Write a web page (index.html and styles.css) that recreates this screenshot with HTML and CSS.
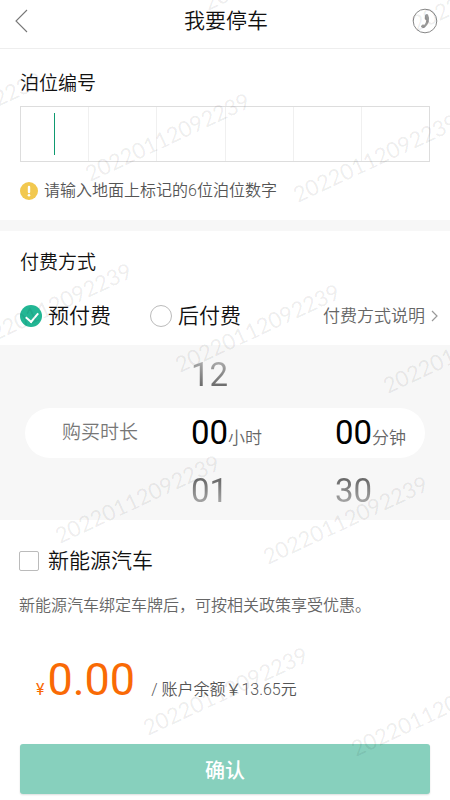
FILE: index.html
```html
<!DOCTYPE html>
<html lang="zh-CN">
<head>
  <meta charset="UTF-8" />
  <meta name="viewport" content="width=device-width, initial-scale=1" />
  <title>我要停车</title>
  <link rel="stylesheet" href="styles.css">
</head>
<body>
  <header class="topbar">
    <button class="icon-btn" type="button" aria-label="返回">
      <svg width="14" height="26" viewBox="0 0 14 26" fill="none" stroke="#777" stroke-width="1.1"><path d="M13 2 2 13l11 11" /></svg>
    </button>
    <h1>我要停车</h1>
    <button class="icon-btn" type="button" aria-label="电话">
      <svg width="26" height="26" viewBox="0 0 26 26">
        <circle cx="13" cy="13" r="11.8" fill="none" stroke="#888" stroke-width="1" />
        <path d="M13.600 6.400q1.500-1 2.400.2 1.800 3.600.8 7.200-1.100 3.600-4.400 6-.8.500-1.600.200l-1.600-.9q-.5-.5-.1-1.100l1.100-1.300q.5-.5 1.200-.2l.8.400q1.900-2 2.100-4.700l-1.100-.6q-.5-.3-.4-.9l.3-3.400q0-.6.5-.9z" fill="#999" />
      </svg>
    </button>
  </header>

  <form class="parking">
    <section class="berth">
      <h2>泊位编号</h2>
      <div class="code">
        <label class="cell active"><input type="text" inputmode="numeric" maxlength="1" aria-label="第1位"></label>
        <label class="cell"><input type="text" inputmode="numeric" maxlength="1" aria-label="第2位"></label>
        <label class="cell"><input type="text" inputmode="numeric" maxlength="1" aria-label="第3位"></label>
        <label class="cell"><input type="text" inputmode="numeric" maxlength="1" aria-label="第4位"></label>
        <label class="cell"><input type="text" inputmode="numeric" maxlength="1" aria-label="第5位"></label>
        <label class="cell"><input type="text" inputmode="numeric" maxlength="1" aria-label="第6位"></label>
      </div>
      <p class="hint">
        <svg width="18" height="18" viewBox="0 0 18 18">
          <circle cx="9" cy="9" r="9" fill="#f2c84f" />
          <path d="M9 5v5" stroke="#fff" stroke-width="2.400" stroke-linecap="round" />
          <circle cx="9" cy="13.200" r="1.300" fill="#fff" />
        </svg>
        请输入地面上标记的6位泊位数字
      </p>
    </section>

    <section class="payment">
      <h2>付费方式</h2>
      <div class="methods">
        <label><input type="radio" name="method" value="pre" checked>预付费</label>
        <label><input type="radio" name="method" value="post">后付费</label>
        <a href="#">付费方式说明
          <svg width="7" height="12" viewBox="0 0 7 12" fill="none" stroke="#999" stroke-width="1.200"><path d="M1 1l5 5-5 5" /></svg>
        </a>
      </div>
    </section>

    <section class="picker">
      <div class="pill"></div>
      <span class="picker-label">购买时长</span>
      <span class="num hour prev">12</span>
      <span class="now hour"><span class="num">00</span>小时</span>
      <span class="num hour next">01</span>
      <span class="now minute"><span class="num">00</span>分钟</span>
      <span class="num minute next">30</span>
    </section>

    <section class="energy">
      <label><input type="checkbox" name="energy">新能源汽车</label>
      <p>新能源汽车绑定车牌后，可按相关政策享受优惠。</p>
    </section>

    <section class="total">
      <p class="price"><span>¥</span><strong>0.00</strong></p>
      <p class="balance">/ 账户余额￥13.65元</p>
    </section>

    <button class="confirm" type="submit">确认</button>
  </form>

  <svg class="watermark" aria-hidden="true">
    <text transform="translate(208 11) rotate(-25)">20220112092239</text>
    <text transform="translate(416 32) rotate(-25)">20220112092239</text>
    <text transform="translate(-118 161) rotate(-25)">20220112092239</text>
    <text transform="translate(90 182) rotate(-25)">20220112092239</text>
    <text transform="translate(298 203) rotate(-25)">20220112092239</text>
    <text transform="translate(-28 352) rotate(-25)">20220112092239</text>
    <text transform="translate(180 373) rotate(-25)">20220112092239</text>
    <text transform="translate(388 394) rotate(-25)">20220112092239</text>
    <text transform="translate(60 544) rotate(-25)">20220112092239</text>
    <text transform="translate(268 565) rotate(-25)">20220112092239</text>
    <text transform="translate(148 736) rotate(-25)">20220112092239</text>
    <text transform="translate(356 757) rotate(-25)">20220112092239</text>
  </svg>
</body>
</html>
```
FILE: styles.css
```css
* {
  box-sizing: border-box;
}

body {
  position: relative;
  margin: 0;
  font-family: Roboto, 'Noto Sans CJK SC', sans-serif;
  font-weight: 350;
  background: #fff;
  color: #111;
}

h1,
h2,
p {
  margin: 0;
  font-weight: 350;
}

button,
input {
  font: inherit;
  margin: 0;
}

.topbar {
  display: flex;
  align-items: center;
  justify-content: space-between;
  height: 49px;
  padding: 0 12px 6px 14px;
  border-bottom: 1px solid #eee;
}

h1 {
  font-size: 21px;
  line-height: 30px;
}

.icon-btn {
  display: flex;
  width: 26px;
  padding: 0;
  border: 0;
  background: none;
}

h2 {
  font-size: 19px;
  line-height: 28px;
}

.berth {
  padding: 21px 20px 17px;
  border-bottom: 11px solid #f7f7f7;
}

.code {
  display: flex;
  height: 56px;
  margin: 8px 0 17px;
  border: 1px solid #ddd;
}

.cell {
  position: relative;
  flex: 1;
}

.cell + .cell {
  border-left: 1px solid #f0f0f0;
}

.cell input {
  width: 100%;
  height: 100%;
  border: 0;
  outline: 0;
  background: none;
  text-align: center;
  font-size: 32px;
}

.cell.active::after {
  content: "";
  position: absolute;
  top: 6px;
  left: calc(50% - 1px);
  width: 1px;
  height: 42px;
  background: #0f9a70;
}

.hint {
  display: flex;
  align-items: center;
  gap: 6px;
  font-size: 16px;
  line-height: 24px;
  color: #555;
}

.payment {
  padding: 18px 12px 12px 20px;
}

.methods {
  display: flex;
  align-items: center;
  gap: 39px;
  margin-top: 22px;
}

.methods label,
.energy label {
  display: flex;
  align-items: center;
  font-size: 21px;
  line-height: 30px;
}

.methods label {
  gap: 6px;
}

.methods input {
  appearance: none;
  width: 22px;
  height: 22px;
  border: 1px solid #bbb;
  border-radius: 50%;
}

.methods input:checked {
  position: relative;
  border: 0;
  background: #22b694;
}

.methods input:checked::after {
  content: "";
  position: absolute;
  top: 7px;
  left: 6px;
  width: 10px;
  height: 6px;
  border: solid #fff;
  border-width: 0 0 2px 2px;
  transform: rotate(-50deg);
}

.methods a {
  display: flex;
  align-items: center;
  gap: 6px;
  margin-left: auto;
  font-size: 17px;
  line-height: 34px;
  color: #666;
  text-decoration: none;
}

.picker {
  display: grid;
  grid-template-columns: 129fr 144fr 90fr;
  grid-template-rows: repeat(3, 58px);
  align-items: center;
  padding: 1px 25px 0 62px;
  background: #f7f7f7;
}

.pill {
  grid-area: 2 / 1 / 3 / 4;
  height: 50px;
  margin-left: -37px;
  border-radius: 25px;
  background: #fff;
}

.picker-label {
  grid-area: 2 / 1;
  font-size: 19px;
  line-height: 28px;
  color: #777;
}

.num {
  font-size: 33px;
  font-weight: 400;
  line-height: 40px;
}

.hour {
  grid-column: 2;
}

.minute {
  grid-column: 3;
}

.now {
  grid-row: 2;
  font-size: 17px;
  color: #666;
}

.now .num {
  color: #000;
}

.prev,
.next {
  justify-self: start;
  color: transparent;
  background: linear-gradient(#bbb, #555);
  background-clip: text;
  -webkit-background-clip: text;
}

.prev {
  grid-row: 1;
}

.next {
  grid-row: 3;
  background-image: linear-gradient(#555, #bbb);
}

.energy {
  padding: 26px 19px 0;
}

.energy label {
  gap: 9px;
}

.energy input {
  appearance: none;
  width: 20px;
  height: 20px;
  border: 1px solid #bbb;
  border-radius: 2px;
}

.energy p {
  margin-top: 19px;
  font-size: 16px;
  line-height: 22px;
  color: #666;
}

.total {
  display: flex;
  align-items: baseline;
  gap: 16px;
  padding: 34px 36px 0;
}

.price {
  display: flex;
  align-items: baseline;
  gap: 3px;
  font-size: 16px;
  color: #f96a05;
}

.price span {
  font-weight: 400;
}

.price strong {
  font-size: 45px;
  font-weight: 400;
  line-height: 58px;
}

.balance {
  font-size: 16px;
  line-height: 22px;
  color: #555;
}

.confirm {
  display: block;
  width: calc(100% - 40px);
  height: 50px;
  margin: 35px 20px 5px;
  border: 0;
  border-radius: 3px;
  background: #87d0bd;
  box-shadow: 0 1px 2px #ddd;
  color: #fff;
  font-size: 20px;
  font-weight: 500;
}

.watermark {
  position: absolute;
  top: 0;
  left: 0;
  width: 100%;
  height: 100%;
  overflow: hidden;
  pointer-events: none;
  font-family: Lato, sans-serif;
  font-size: 22px;
  font-weight: 400;
  fill: rgba(0, 0, 0, 0.08);
}
```
